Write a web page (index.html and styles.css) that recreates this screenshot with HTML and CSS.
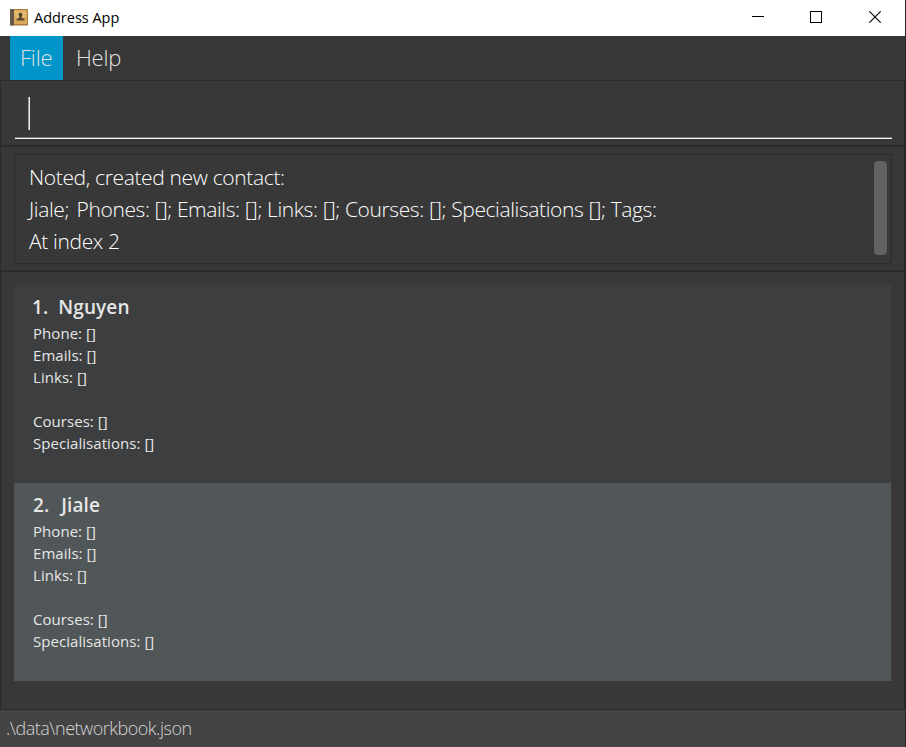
FILE: index.html
```html
<!DOCTYPE html>
<html lang="en">
<head>
<meta charset="utf-8">
<title>Address App</title>
<link rel="stylesheet" href="styles.css">
</head>
<body>
<div class="window">
  <header class="titlebar">
    <svg class="app-icon" width="18" height="17" viewBox="0 0 18 17">
      <rect x="0" y="0" width="18" height="16.5" rx="1" fill="#a87a3c"/>
      <rect x="0" y="0" width="4" height="16.5" rx="1" fill="#66564c"/>
      <rect x="4" y="1" width="13" height="14" fill="#d8aa58"/>
      <rect x="5" y="2" width="11" height="6" fill="#e3bb70"/>
      <path d="M10.500 3.500a2 2.100 0 0 1 1.200 3.700v1.700l2.800 1v1.600h-8v-1.600l2.800-1v-1.700a2 2.100 0 0 1 1.200-3.700z" fill="#54432f"/>
    </svg>
    <span class="app-title">Address App</span>
    <div class="controls">
      <svg width="12" height="12" viewBox="0 0 12 12" shape-rendering="crispEdges"><path d="M0 5.500h12" stroke="#000"/></svg>
      <svg width="12" height="12" viewBox="0 0 12 12" shape-rendering="crispEdges"><path d="M.5.500h11v11h-11z" fill="none" stroke="#000"/></svg>
      <svg width="12" height="12" viewBox="0 0 12 12"><path d="M.3.300l11.400 11.400M11.700.300L.3 11.700" stroke="#000" stroke-width="1.100"/></svg>
    </div>
  </header>
  <nav class="menubar">
    <span class="menu active">File</span>
    <span class="menu">Help</span>
  </nav>
  <section class="pane command"><div class="field"><span class="caret"></span></div></section>
  <section class="pane result">
    <div class="message">
      <div class="lines">
        <div>Noted, created new contact:</div>
        <div class="details"><span class="name">Jiale;</span> Phones: []; Emails: []; Links: []; Courses: []; Specialisations []; Tags:</div>
        <div>At index 2</div>
      </div>
      <div class="thumb"></div>
    </div>
  </section>
  <section class="pane list">
    <article class="card">
      <h2 class="first"><span>1.</span><span>Nguyen</span></h2>
      <p>Phone: []</p>
      <p>Emails: []</p>
      <p>Links: []</p>
      <p class="empty"></p>
      <p>Courses: []</p>
      <p>Specialisations: []</p>
    </article>
    <article class="card selected">
      <h2><span>2.</span><span>Jiale</span></h2>
      <p>Phone: []</p>
      <p>Emails: []</p>
      <p>Links: []</p>
      <p class="empty"></p>
      <p>Courses: []</p>
      <p>Specialisations: []</p>
    </article>
  </section>
  <footer class="status"><span>.\data\networkbook.json</span></footer>
</div>
</body>
</html>
```
FILE: styles.css
```css
* { box-sizing: border-box; }
body { margin: 0; background: #383838; font-family: "Open Sans", "Noto Sans", sans-serif; }
.window { width: 906px; height: 747px; display: flex; flex-direction: column; overflow: hidden; white-space: nowrap; border-right: 1px solid #242424; }
.titlebar { height: 36px; background: #fff; display: flex; align-items: center; padding-left: 10px; flex: none; }
.app-icon { margin-top: -2px; }
.app-title { font-size: 14.500px; letter-spacing: -0.020px; color: #000; margin-left: 6px; line-height: 20px; }
.controls { margin-left: auto; display: flex; gap: 47px; padding-right: 24px; margin-top: -2px; }
.controls svg:first-child { margin-right: -1px; }
.menubar { height: 44px; background: #383838; display: flex; padding-left: 10px; flex: none; }
.menu { height: 44px; line-height: 42px; font-size: 22px; letter-spacing: -0.200px; font-weight: 300; color: #e2e2e2; padding-left: 13px; }
.menu.active { width: 53px; padding-left: 10px; background: #0096c9; }
.pane { border: 1px solid #2b2b2b; background: #383838; flex: none; }
.command { height: 66px; padding: 0 12px 0 14px; }
.field { height: 58px; border-bottom: 1px solid #f8f8f8; box-shadow: inset 0 -1px #777; padding: 16px 0 0 13px; }
.caret { display: block; width: 2px; height: 33px; background: linear-gradient(90deg, #999 50%, #f0f0f0 50%); }
.result { height: 125px; padding: 7px 12px 7px 13px; }
.message { height: 110px; border: 1px solid #2b2b2b; display: flex; justify-content: space-between; padding: 6px 4px 7px 14px; }
.lines { font-size: 21px; letter-spacing: -0.350px; font-weight: 300; line-height: 33px; color: #fff; }
.lines .details { line-height: 31px; letter-spacing: -0.390px; }
.lines .name { margin-right: 2.500px; }
.thumb { width: 13px; height: 94px; border-radius: 4px; background: #626262; }
.list { height: 439px; padding: 13px 13px 0 13px; }
.card { height: 198px; padding: 7px 19px; background: #3c3e3f; color: #e6e6e6; }
.card.selected { background: #515658; }
h2 { margin: 0; height: 30px; font-size: 19px; letter-spacing: 0.100px; font-weight: 600; line-height: 31px; display: flex; gap: 12px; }
h2.first { gap: 10px; margin-left: -1px; }
p { margin: 0; height: 22px; line-height: 22px; font-size: 15px; letter-spacing: 0.050px; }
.status { flex: 1; background: #444; color: #d4d4d4; font-size: 18px; letter-spacing: -0.480px; font-weight: 300; line-height: 37px; padding-left: 6px; }
```
